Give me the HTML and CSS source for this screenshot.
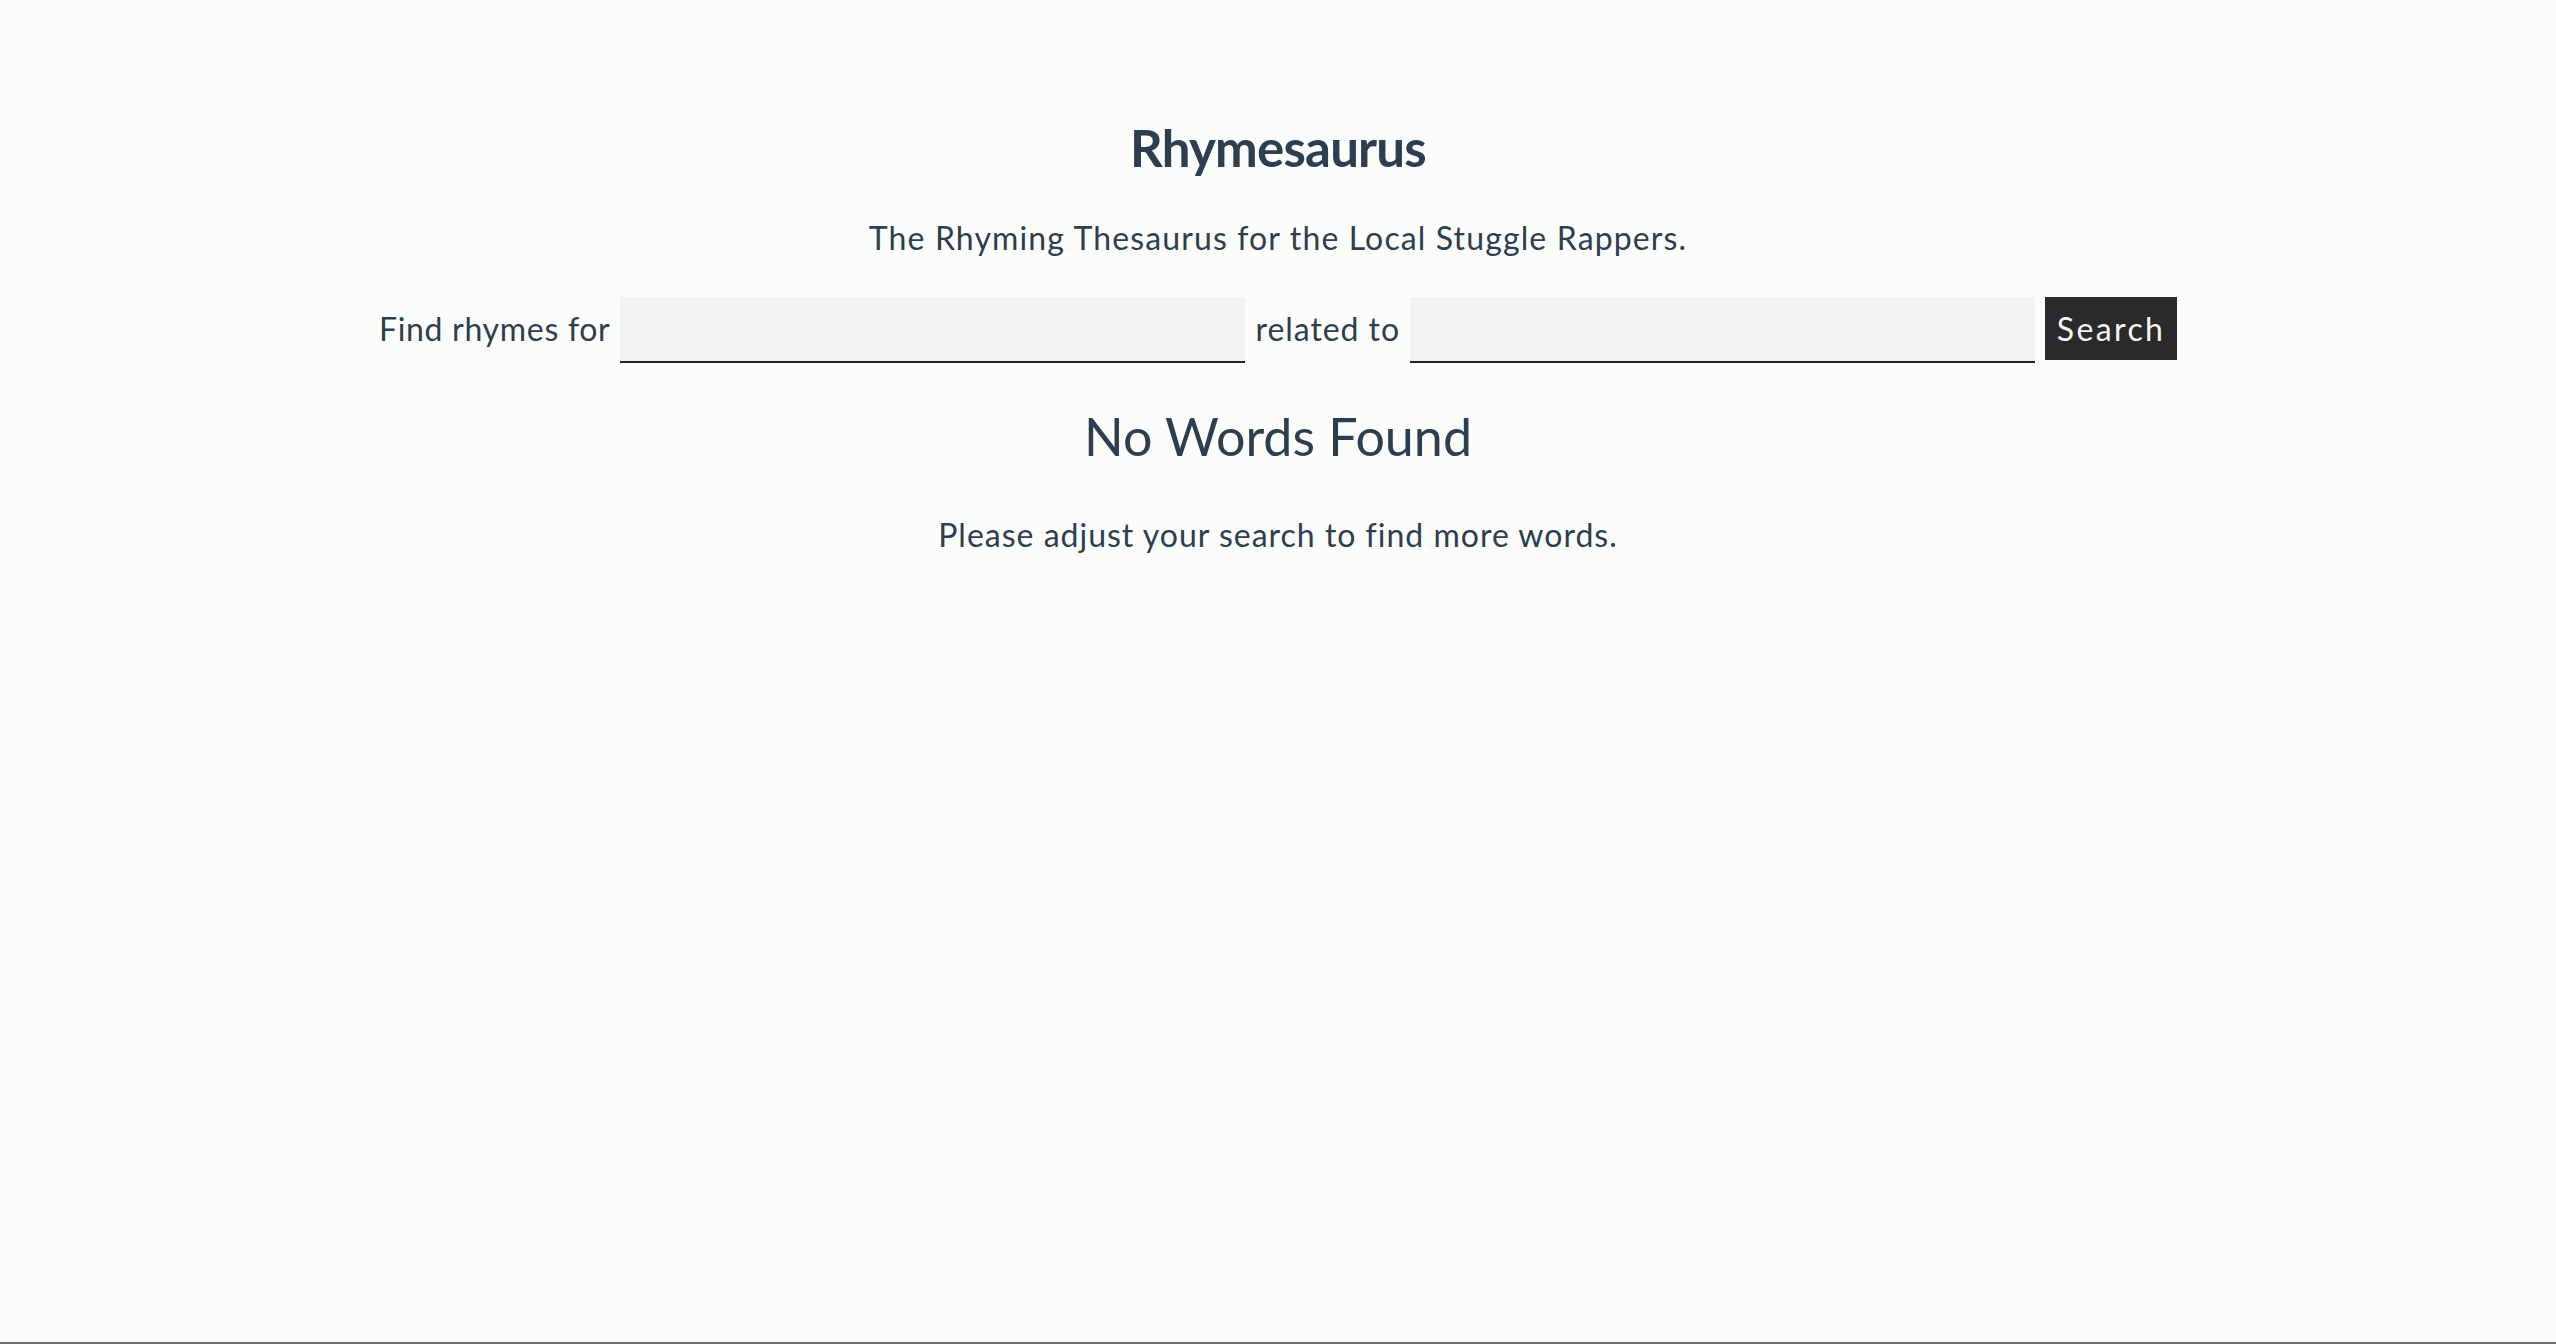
FILE: index.html
```html
<!DOCTYPE html>
<html lang="en">
<head>
<meta charset="utf-8">
<title>Rhymesaurus</title>
<link rel="stylesheet" href="styles.css">
</head>
<body>
<div class="app">
  <h1 class="title">Rhymesaurus</h1>
  <p class="subtitle">The Rhyming Thesaurus for the Local Stuggle Rappers.</p>
  <form class="search-row">
    <label class="label label-rhyme" for="rhyme">Find rhymes for</label>
    <input class="field" id="rhyme" type="text">
    <label class="label label-related" for="related">related to</label>
    <input class="field" id="related" type="text">
    <button class="search-btn" type="button">Search</button>
  </form>
  <h2 class="empty-title">No Words Found</h2>
  <p class="empty-text">Please adjust your search to find more words.</p>
</div>
</body>
</html>
```
FILE: styles.css
```css
html, body {
  margin: 0;
  padding: 0;
}
body {
  background: #fcfcfb;
  min-height: calc(100vh - 2px);
  border-bottom: 2px solid #6e6e78;
  font-family: "Lato", "Noto Sans", sans-serif;
  color: #2c3e50;
}
.app {
  display: flex;
  flex-direction: column;
  align-items: center;
  text-align: center;
  padding-top: 118px;
}
.title {
  margin: 0;
  font-size: 51px;
  line-height: 60px;
  font-weight: 700;
  letter-spacing: -0.8px;
}
.subtitle {
  margin: 40px 0 0;
  font-size: 32px;
  line-height: 40px;
  letter-spacing: 1.13px;
}
.search-row {
  margin-top: 39px;
  display: flex;
  align-items: flex-start;
  gap: 10px;
}
.label {
  font-size: 32px;
  line-height: 63px;
  letter-spacing: 0.95px;
}
.label-rhyme {
  letter-spacing: 0.7px;
}
.field {
  box-sizing: border-box;
  width: 625px;
  height: 66px;
  margin: 0;
  padding: 0 10px;
  border: 0;
  border-bottom: 2px solid #222226;
  border-radius: 0;
  background: #f2f2f4;
  font-family: inherit;
  font-size: 32px;
  color: #2c3e50;
  outline: none;
}
.search-btn {
  box-sizing: border-box;
  width: 132px;
  height: 63px;
  margin: 0;
  padding: 0;
  border: 0;
  border-radius: 0;
  background: #2a2a2d;
  color: #f4f4f4;
  font-family: inherit;
  font-size: 32px;
  line-height: 63px;
  letter-spacing: 2.4px;
}
.empty-title {
  margin: 43px 0 0;
  font-size: 52px;
  line-height: 60px;
  font-weight: 400;
}
.empty-text {
  margin: 49px 0 0;
  font-size: 32px;
  line-height: 40px;
  letter-spacing: 1px;
}
```
